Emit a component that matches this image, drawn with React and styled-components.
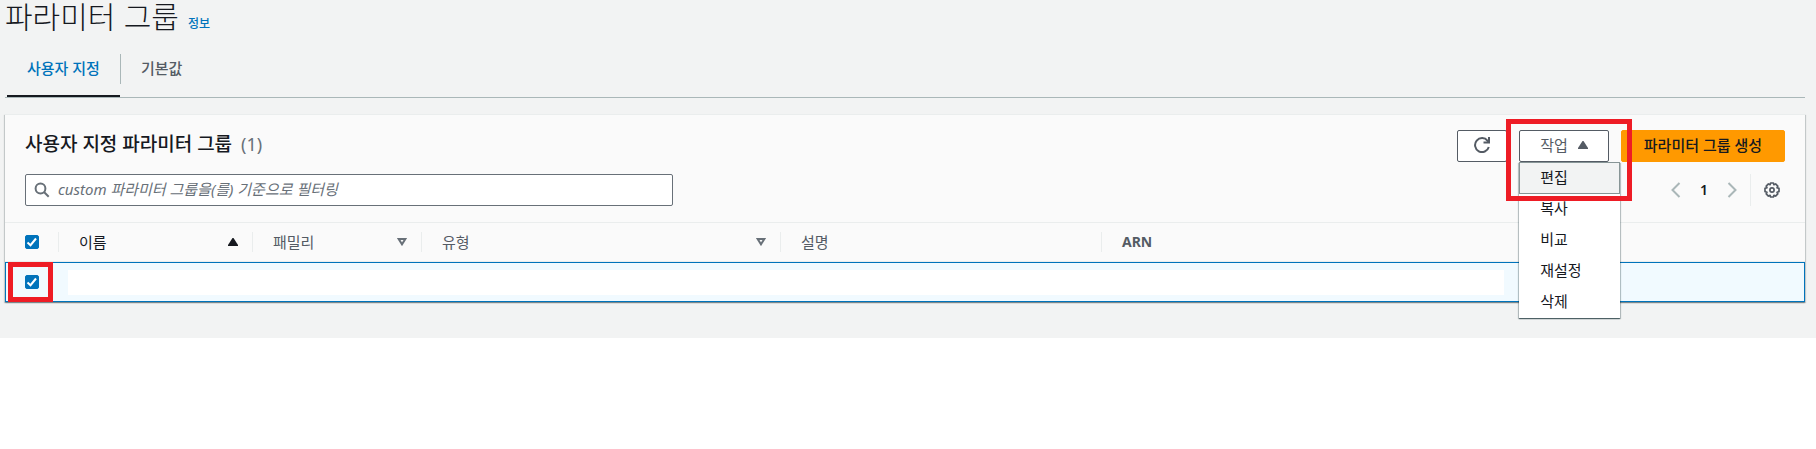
import React from "react";
import styled, { createGlobalStyle } from "styled-components";

const GlobalStyle = createGlobalStyle`
  * {
    box-sizing: border-box;
  }

  body {
    margin: 0;
    background: #ffffff;
    color: #16191f;
    font-family: "Noto Sans", "Noto Sans CJK KR", sans-serif;
    font-size: 15px;
    line-height: 20px;
  }

  button,
  input {
    font: inherit;
    color: inherit;
  }
`;

const Page = styled.main`
  background: #f2f3f3;
  padding: 0 11px 36px 5px;
`;

const PageHeader = styled.header`
  display: flex;
  align-items: baseline;
  gap: 9px;
  height: 40px;
`;

const PageTitle = styled.h1`
  margin: 0;
  font-family: "Liberation Sans", "Noto Sans CJK KR", sans-serif;
  font-size: 30px;
  font-weight: 300;
  line-height: 36px;
`;

const InfoLink = styled.a`
  color: #0073bb;
  font-size: 12px;
  font-weight: 500;
  text-decoration: none;
`;

const Tabs = styled.nav`
  display: flex;
  padding-left: 2px;
  border-bottom: 1px solid #aab7b8;
`;

const Tab = styled.a`
  display: flex;
  align-items: center;
  height: 57px;
  padding: 0 20px;
  border-bottom: 2px solid ${(props) => (props.$active ? "#16191f" : "transparent")};
  color: ${(props) => (props.$active ? "#0073bb" : "#545b64")};
  font-weight: 500;
  text-decoration: none;
`;

const TabDivider = styled.span`
  align-self: center;
  width: 1px;
  height: 30px;
  background: #aab7b8;
`;

const Panel = styled.section`
  margin-top: 16px;
  background: #fafafa;
  border-top: 1px solid #eaeded;
  box-shadow: 0 1px 1px 0 rgba(0, 28, 36, 0.3), 1px 1px 1px 0 rgba(0, 28, 36, 0.15),
    -1px 1px 1px 0 rgba(0, 28, 36, 0.15);
`;

const PanelHeader = styled.div`
  display: flex;
  flex-direction: column;
  gap: 12px;
  padding: 15px 20px 16px;
`;

const PanelRow = styled.div`
  display: flex;
  justify-content: space-between;
`;

const PanelTitle = styled.h2`
  display: flex;
  gap: 9px;
  margin: 0;
  font-size: 19px;
  font-weight: 500;
  line-height: 28px;
`;

const Counter = styled.span`
  color: #687078;
  font-size: 18px;
  font-weight: 400;
`;

const Actions = styled.div`
  display: flex;
  gap: 12px;
`;

const Button = styled.button`
  display: flex;
  align-items: center;
  justify-content: center;
  gap: 10px;
  height: 32px;
  padding: 0 ${(props) => (props.$icon ? "16px" : props.$primary ? "22px" : "20px")} 2px;
  border: 1px solid ${(props) => (props.$primary ? "#ff9900" : "#545b64")};
  border-radius: 2px;
  background: ${(props) => (props.$primary ? "#ff9900" : "#ffffff")};
  color: ${(props) => (props.$primary ? "#16191f" : "#545b64")};
  font-weight: ${(props) => (props.$primary ? "500" : "400")};
  white-space: nowrap;
  cursor: pointer;
`;

const Dropdown = styled.div`
  position: relative;
`;

const Menu = styled.ul`
  position: absolute;
  top: 32px;
  left: 0;
  z-index: 2;
  width: 101px;
  margin: 0;
  padding: 0;
  list-style: none;
  background: #ffffff;
  box-shadow: 0 1px 1px 0 rgba(0, 28, 36, 0.5), 1px 1px 1px 0 rgba(0, 28, 36, 0.2),
    -1px 1px 1px 0 rgba(0, 28, 36, 0.2);
`;

const MenuItem = styled.button`
  display: block;
  width: 100%;
  height: ${(props) => (props.$active ? "32px" : "31px")};
  padding: 0 20px ${(props) => (props.$active ? "2px" : "4px")};
  border: 1px solid ${(props) => (props.$active ? "#879596" : "transparent")};
  background: ${(props) => (props.$active ? "#f2f3f3" : "transparent")};
  text-align: left;
  cursor: pointer;
`;

const Highlight = styled.span`
  position: absolute;
  inset: ${(props) => props.$inset};
  z-index: 3;
  border: 5px solid #ee1c25;
  pointer-events: none;
`;

const SearchBox = styled.label`
  display: flex;
  align-items: center;
  gap: 8px;
  width: 40%;
  min-width: 240px;
  max-width: 648px;
  height: 32px;
  padding: 0 8px;
  border: 1px solid #687078;
  border-radius: 2px;
  background: #ffffff;
`;

const SearchInput = styled.input`
  flex: 1;
  min-width: 0;
  padding: 0 0 2px;
  border: 0;
  outline: 0;
  background: transparent;

  &::placeholder {
    color: #687078;
    font-style: italic;
    opacity: 1;
  }
`;

const Pagination = styled.div`
  display: flex;
  align-items: center;
`;

const IconButton = styled.button`
  display: flex;
  padding: 0;
  border: 0;
  background: transparent;
  color: ${(props) => (props.$muted ? "#aab7b8" : "#545b64")};
  cursor: pointer;
`;

const PageNumber = styled.button`
  width: 40px;
  padding: 0;
  border: 0;
  background: transparent;
  font-size: 14px;
  font-weight: 600;
`;

const Settings = styled.div`
  display: flex;
  align-items: center;
  height: 32px;
  margin-left: 10px;
  padding: 0 5px 0 13px;
  border-left: 1px solid #eaeded;
`;

const Table = styled.table`
  width: 100%;
  table-layout: fixed;
  border-spacing: 0;
  border-top: 1px solid #eaeded;
`;

const HeadCell = styled.th`
  width: ${(props) => props.$width || "auto"};
  height: 39px;
  padding: 0;
  border-bottom: 1px solid #eaeded;
  color: ${(props) => (props.$sorted ? "#16191f" : "#545b64")};
  font-weight: 400;
  text-align: left;
`;

const HeadContent = styled.div`
  display: flex;
  align-items: center;
  justify-content: space-between;
  height: 20px;
  padding: 0 14px 0 20px;
  border-right: 1px solid ${(props) => (props.$last ? "transparent" : "#eaeded")};
`;

const Latin = styled.span`
  font-size: 14px;
  font-weight: 700;
`;

const SelectedCell = styled.td`
  position: relative;
  height: 40px;
  padding: 0;
  background: #f1faff;
  border: solid #0073bb;
  border-width: ${(props) => (props.$first ? "1px 0 1px 1px" : "1px 1px 1px 0")};
`;

const SelectContent = styled.div`
  display: flex;
  padding-left: 19px;
`;

const BlankValue = styled.div`
  height: 25px;
  margin: 0 300px 0 9px;
  background: #ffffff;
`;

const CheckLabel = styled.label`
  position: relative;
  display: block;
  width: 14px;
  height: 14px;

  svg {
    position: absolute;
    inset: 0;
    pointer-events: none;
  }
`;

const CheckInput = styled.input`
  appearance: none;
  display: block;
  width: 14px;
  height: 14px;
  margin: 0;
  border: 1px solid #687078;
  border-radius: 2px;
  background: #ffffff;

  &:checked {
    border-color: #0073bb;
    background: #0073bb;
  }

  &:not(:checked) + svg {
    display: none;
  }
`;

const Checkbox = ({ label }) => (
  <CheckLabel>
    <CheckInput type="checkbox" aria-label={label} defaultChecked />
    <svg width="14" height="14" viewBox="0 0 14 14" fill="none" stroke="#fff" strokeWidth="2">
      <path d="M2.5 7.5 5.5 10.2 11 3.5" />
    </svg>
  </CheckLabel>
);

const SearchIcon = () => (
  <svg width="16" height="16" viewBox="0 0 16 16" fill="none" stroke="#687078" strokeWidth="2">
    <circle cx="6.5" cy="6.5" r="4.9" />
    <path d="m10 10 4.7 4.7" />
  </svg>
);

const RefreshIcon = () => (
  <svg width="16" height="16" viewBox="0 0 16 16" fill="none" stroke="currentColor" strokeWidth="2">
    <path d="M14.8 10A7 7 0 1 1 13.6 3.8L14.8 5" />
    <path d="M15 0v5.5H9.5" />
  </svg>
);

const TriangleUp = () => (
  <svg width="10" height="8" viewBox="0 0 10 8" fill="currentColor">
    <path d="M4.5 0h1L10 7v1H0V7Z" />
  </svg>
);

const TriangleDown = () => (
  <svg width="10" height="8" viewBox="0 0 10 8" fill="none" stroke="#687078" strokeWidth="2">
    <path d="M1.7 1H8.3L5 6.3Z" />
  </svg>
);

const Chevron = ({ right }) => (
  <svg width="16" height="16" viewBox="0 0 16 16" fill="none" stroke="currentColor" strokeWidth="2">
    <path d={right ? "m4.5 1 7 7-7 7" : "m11.5 1-7 7 7 7"} />
  </svg>
);

const GearIcon = () => (
  <svg width="16" height="16" viewBox="0 0 16 16" fill="none" stroke="currentColor">
    <path
      strokeWidth="1.7"
      strokeLinejoin="round"
      d="M6.6 1h2.8l.5 1.7 1.7-.8 2.2 2.2-.8 1.7 2 .6v3.2l-2 .6.8 1.7-2.2 2.2-1.7-.8-.5 1.7H6.6l-.5-1.7-1.7.8-2.2-2.2.8-1.7-2-.6V6.4l2-.6-.8-1.7 2.2-2.2 1.7.8Z"
    />
    <circle cx="8" cy="8" r="2.1" strokeWidth="1.7" />
  </svg>
);

const menuItems = ["편집", "복사", "비교", "재설정", "삭제"];

const columns = [
  { name: "이름", width: "194px", sorted: true, icon: <TriangleUp /> },
  { name: "패밀리", width: "169px", icon: <TriangleDown /> },
  { name: "유형", width: "359px", icon: <TriangleDown /> },
  { name: "설명", width: "321px" },
  { name: "ARN", latin: true, last: true },
];

const App = () => {
  return (
    <>
      <GlobalStyle />
      <Page>
        <PageHeader>
          <PageTitle>파라미터 그룹</PageTitle>
          <InfoLink href="#info">정보</InfoLink>
        </PageHeader>

        <Tabs>
          <Tab href="#custom" $active>사용자 지정</Tab>
          <TabDivider />
          <Tab href="#default">기본값</Tab>
        </Tabs>

        <Panel>
          <PanelHeader>
            <PanelRow>
              <PanelTitle>
                사용자 지정 파라미터 그룹 <Counter>(1)</Counter>
              </PanelTitle>
              <Actions>
                <Button type="button" $icon aria-label="새로 고침">
                  <RefreshIcon />
                </Button>
                <Dropdown>
                  <Button type="button" aria-expanded="true">
                    작업 <TriangleUp />
                  </Button>
                  <Menu>
                    {menuItems.map((item, index) => (
                      <li key={item}>
                        <MenuItem type="button" $active={index === 0}>{item}</MenuItem>
                      </li>
                    ))}
                  </Menu>
                  <Highlight $inset="-11px -23px -39px -13px" />
                </Dropdown>
                <Button type="button" $primary>파라미터 그룹 생성</Button>
              </Actions>
            </PanelRow>

            <PanelRow>
              <SearchBox>
                <SearchIcon />
                <SearchInput
                  type="text"
                  aria-label="필터"
                  placeholder="custom 파라미터 그룹을(를) 기준으로 필터링"
                />
              </SearchBox>
              <Pagination>
                <IconButton type="button" $muted aria-label="이전">
                  <Chevron />
                </IconButton>
                <PageNumber type="button">1</PageNumber>
                <IconButton type="button" $muted aria-label="다음">
                  <Chevron right />
                </IconButton>
                <Settings>
                  <IconButton type="button" aria-label="설정">
                    <GearIcon />
                  </IconButton>
                </Settings>
              </Pagination>
            </PanelRow>
          </PanelHeader>

          <Table>
            <thead>
              <tr>
                <HeadCell $width="54px">
                  <HeadContent>
                    <Checkbox label="모두 선택" />
                  </HeadContent>
                </HeadCell>
                {columns.map((column) => (
                  <HeadCell key={column.name} $width={column.width} $sorted={column.sorted}>
                    <HeadContent $last={column.last}>
                      {column.latin ? <Latin>{column.name}</Latin> : column.name}
                      {column.icon}
                    </HeadContent>
                  </HeadCell>
                ))}
              </tr>
            </thead>
            <tbody>
              <tr>
                <SelectedCell $first>
                  <SelectContent>
                    <Checkbox label="선택" />
                  </SelectContent>
                  <Highlight $inset="-1px 6px -1px 2px" />
                </SelectedCell>
                <SelectedCell colSpan={5}>
                  <BlankValue />
                </SelectedCell>
              </tr>
            </tbody>
          </Table>
        </Panel>
      </Page>
    </>
  );
};

export default App;
